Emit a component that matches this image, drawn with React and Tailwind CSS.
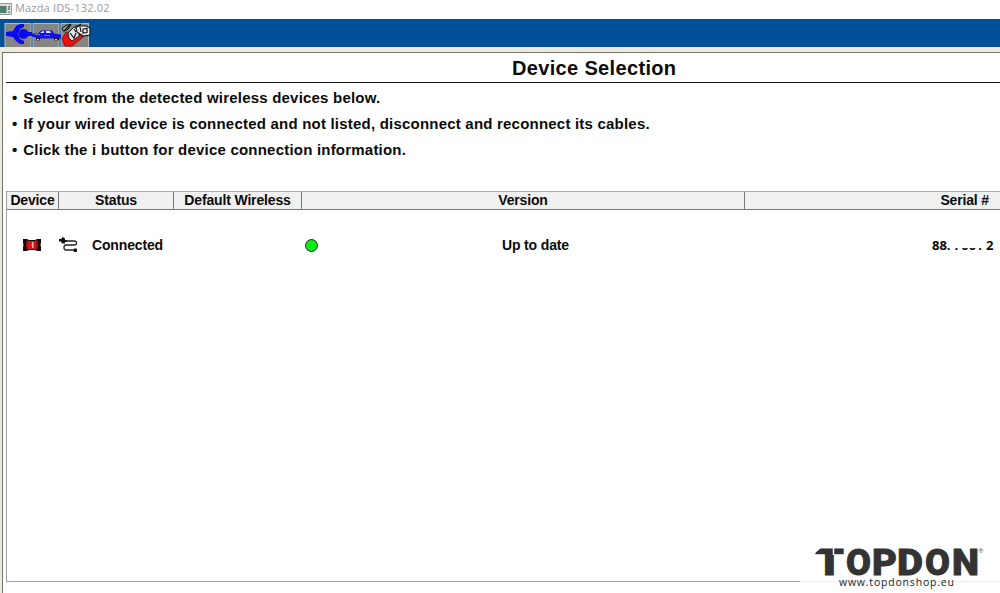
import React from 'react';

const instructions = [
  'Select from the detected wireless devices below.',
  'If your wired device is connected and not listed, disconnect and reconnect its cables.',
  'Click the i button for device connection information.',
];

const logoLetters = [
  { char: 'T', x: 15, width: 29 },
  { char: 'O', x: 46, width: 25 },
  { char: 'P', x: 72, width: 25 },
  { char: 'D', x: 97, width: 26 },
  { char: 'O', x: 125, width: 25 },
  { char: 'N', x: 152, width: 27 },
];

const WindowIcon = () => (
  <svg className="block shrink-0" width="12" height="14" viewBox="0 0 12 14">
    <rect x="0" y="1.5" width="11.5" height="11" fill="#d9dedb" />
    <path d="M0 1.5h11.5v11H0" fill="none" stroke="#939b98" />
    <rect x="0" y="4" width="6.5" height="7" fill="#4f8072" />
    <path d="M9 4v4M9 9.5v1.5" stroke="#4d5d58" strokeWidth="1.2" />
  </svg>
);

const ToolbarIcons = () => (
  <svg className="block" width="94" height="28" viewBox="0 0 94 28">
    <g fill="#858582" stroke="#b4bac0">
      <rect x="5" y="4.5" width="26" height="24" />
      <rect x="33" y="4.5" width="26" height="24" />
      <rect x="61" y="4.5" width="27.5" height="24" />
    </g>
    {/* plug */}
    <path d="M24 5h-4l-4 2-3 5-7 1v4l7 1 3 4 4 3h4v-3l-4-2-2-5 2-5 4-2z" fill="#0b0bf2" />
    <circle cx="23.5" cy="15" r="5" fill="#0b0bf2" />
    <path d="M24 13h8v4h-8z" fill="#0b0bf2" />
    {/* car */}
    <path d="M32 14.5h6l3-3h11l2 3 7 1v4H38l-6-2z" fill="#1212e8" />
    <path d="M42 12.5l2-.5v2h-4zM46 12h4l1 2h-5z" fill="#d3dcf2" />
    <path d="M35 15.5h5M44 16.5h6" stroke="#8991d7" strokeWidth=".8" />
    <path d="M36 20h4M54 20h5" stroke="#182020" strokeWidth="2.5" />
    <path d="M37 20.5h2M55 20.5h2" stroke="#cfd6d6" />
    {/* tool box */}
    <path d="M62 20l4-7 6 3 13-3-3 6-10 8h-7z" fill="#ee1010" stroke="#5d1010" strokeWidth=".7" />
    <path d="M68 14l6-6 5 3v6l-7 5-3-3z" fill="#dfe5e5" stroke="#202020" />
    <path d="M76 7h10l4 2v7l-7 1-6-4z" fill="#ecefed" stroke="#151515" strokeWidth="1.2" />
    <path d="M62 9l5-3h4l-4 5-4 1z" fill="#8fa6a0" stroke="#111" />
    <path d="M64 12l7-7M70 14l4 5 2-5M80 8l1 5M83 10l4-.5v4l-4 .5zM74 10l2 3M77 8l4-3" fill="none" stroke="#101010" strokeWidth="1.2" />
  </svg>
);

const DeviceIcon = () => (
  <svg className="block" width="20" height="14" viewBox="0 0 20 14">
    <path d="M1 1h4l2 1h6l2-1h4v4l-.5 2 .5 2v4h-4l-2-1H7l-2 1H1V9l.5-2L1 5z" fill="#160c0c" />
    <path d="M5 2l2 1h6l2-1 1 5-1 5-2-1H7l-2 1-1-5z" fill="#d5141b" />
    <path d="M5.5 3v8M14.5 3v8" stroke="#971018" />
    <path d="M10.8 4v6M9.5 7h2" stroke="#f3d8ae" strokeWidth="1.2" />
  </svg>
);

const CableIcon = () => (
  <svg className="block" width="20" height="16" viewBox="0 0 20 16">
    <path d="M0 2h2l2-2 2 1.500V3h2v2H6v1.500H3L2 4.500H0z" fill="#111" />
    <path d="M6 4h9.500q2 0 2 2T15.500 8H7Q5 8 5 10.500T7 13h9" fill="none" stroke="#222" strokeWidth="1.3" />
    <rect x="14.500" y="11.500" width="3.500" height="3.500" rx="1" fill="#111" />
  </svg>
);

const Logo = () => (
  <svg className="block overflow-visible" width="200" height="50" viewBox="0 0 200 50" fontFamily="Roboto, sans-serif">
    <path d="M0 38.500h200" stroke="#ececec" />
    <g fontSize="37.5" fontWeight="900" fill="#333" stroke="#333" strokeWidth=".8">
      {logoLetters.map(({ char, x, width }) => (
        <text key={x} x={x} y="32" textLength={width} lengthAdjust="spacingAndGlyphs">{char}</text>
      ))}
    </g>
    {/* cuts in the T */}
    <path d="M33.500 4v8" stroke="#fff" strokeWidth="1.500" />
    <path d="M13 12V4h9z" fill="#fff" />
    <text x="178.500" y="10" fontSize="6" fill="#555">®</text>
    <text x="39" y="43" fontFamily="Open Sans, sans-serif" fontSize="10.500" fontWeight="500" fill="#222" textLength="115">www.topdonshop.eu</text>
  </svg>
);

const App = () => {
  return (
    <div className="relative flex h-[593px] w-[1000px] flex-col overflow-hidden bg-white font-['Liberation_Sans',Arial,sans-serif] text-[#0b0b0b]">
      {/* Title bar */}
      <header className="flex h-[19px] shrink-0 items-center gap-[3px] pb-[2px] font-['Open_Sans',sans-serif] text-[11px] text-[#999]">
        <WindowIcon />
        <span className="tracking-[0.18px]">Mazda IDS-132.02</span>
      </header>

      {/* Toolbar */}
      <div className="h-7 shrink-0 bg-[#034f98]">
        <ToolbarIcons />
      </div>

      <div className="flex min-h-0 flex-1 flex-col border-t-[5px] border-l-2 border-[#ece9df]">
        <div className="flex flex-1 flex-col border-t border-l border-[#77756d] pl-[3px]">
          <div className="flex h-[30px] shrink-0 items-center border-b-[1.5px] border-[#151515] pl-[506px]">
            <h1 className="text-[20px] font-bold tracking-[0.34px] whitespace-nowrap">Device Selection</h1>
          </div>

          <ul className="flex h-[108px] shrink-0 flex-col pt-[2px] pl-[6px] text-[15px] leading-[26px] font-bold">
            {instructions.map((line) => (
              <li key={line} className="flex gap-[6px]">
                <span>•</span>
                <span className="tracking-[0.21px] whitespace-nowrap">{line}</span>
              </li>
            ))}
          </ul>

          {/* Device table */}
          <div className="flex h-[391px] flex-col border-b border-l border-[#a0a0a0]">
            <div className="flex h-[19px] shrink-0 border-t border-b border-t-[#aaa] border-b-[#777] bg-[#f0f0f0] text-[14px] leading-[17px] font-bold tracking-[-0.15px] whitespace-nowrap">
              <div className="w-[52px] border-r border-[#777] text-center">Device</div>
              <div className="w-[115px] border-r border-[#777] text-center">Status</div>
              <div className="w-[128px] border-r border-[#777] text-center">Default Wireless</div>
              <div className="w-[443px] border-r border-[#777] text-center">Version</div>
              <div className="flex-1 pr-[11px] text-right">Serial #</div>
            </div>
            <div className="mt-[26px] flex h-[18px] items-center text-[14px] leading-[18px] font-bold tracking-[-0.15px] whitespace-nowrap">
              <div className="flex w-[52px] pl-[15px]"><DeviceIcon /></div>
              <div className="flex w-[246px] items-center gap-[13px]">
                <CableIcon />
                <span>Connected</span>
              </div>
              <div className="size-[13px] rounded-full border-[1.5px] border-[#123d12] bg-[#09ed18]" />
              <div className="ml-[184px] w-[430px]">Up to date</div>
              <div className="flex font-['Open_Sans',sans-serif] text-[13px] tracking-normal">
                <span>88.</span>
                <span className="ml-[4px]">.</span>
                <span className="ml-[3px] [clip-path:inset(12px_0_0_0)]">00</span>
                <span className="ml-[2px]">.</span>
                <span className="ml-[4px]">2</span>
              </div>
            </div>
          </div>
        </div>
      </div>

      {/* Shop watermark */}
      <div className="absolute top-[543px] left-[800px] bg-white">
        <Logo />
      </div>
    </div>
  );
};

export default App;
